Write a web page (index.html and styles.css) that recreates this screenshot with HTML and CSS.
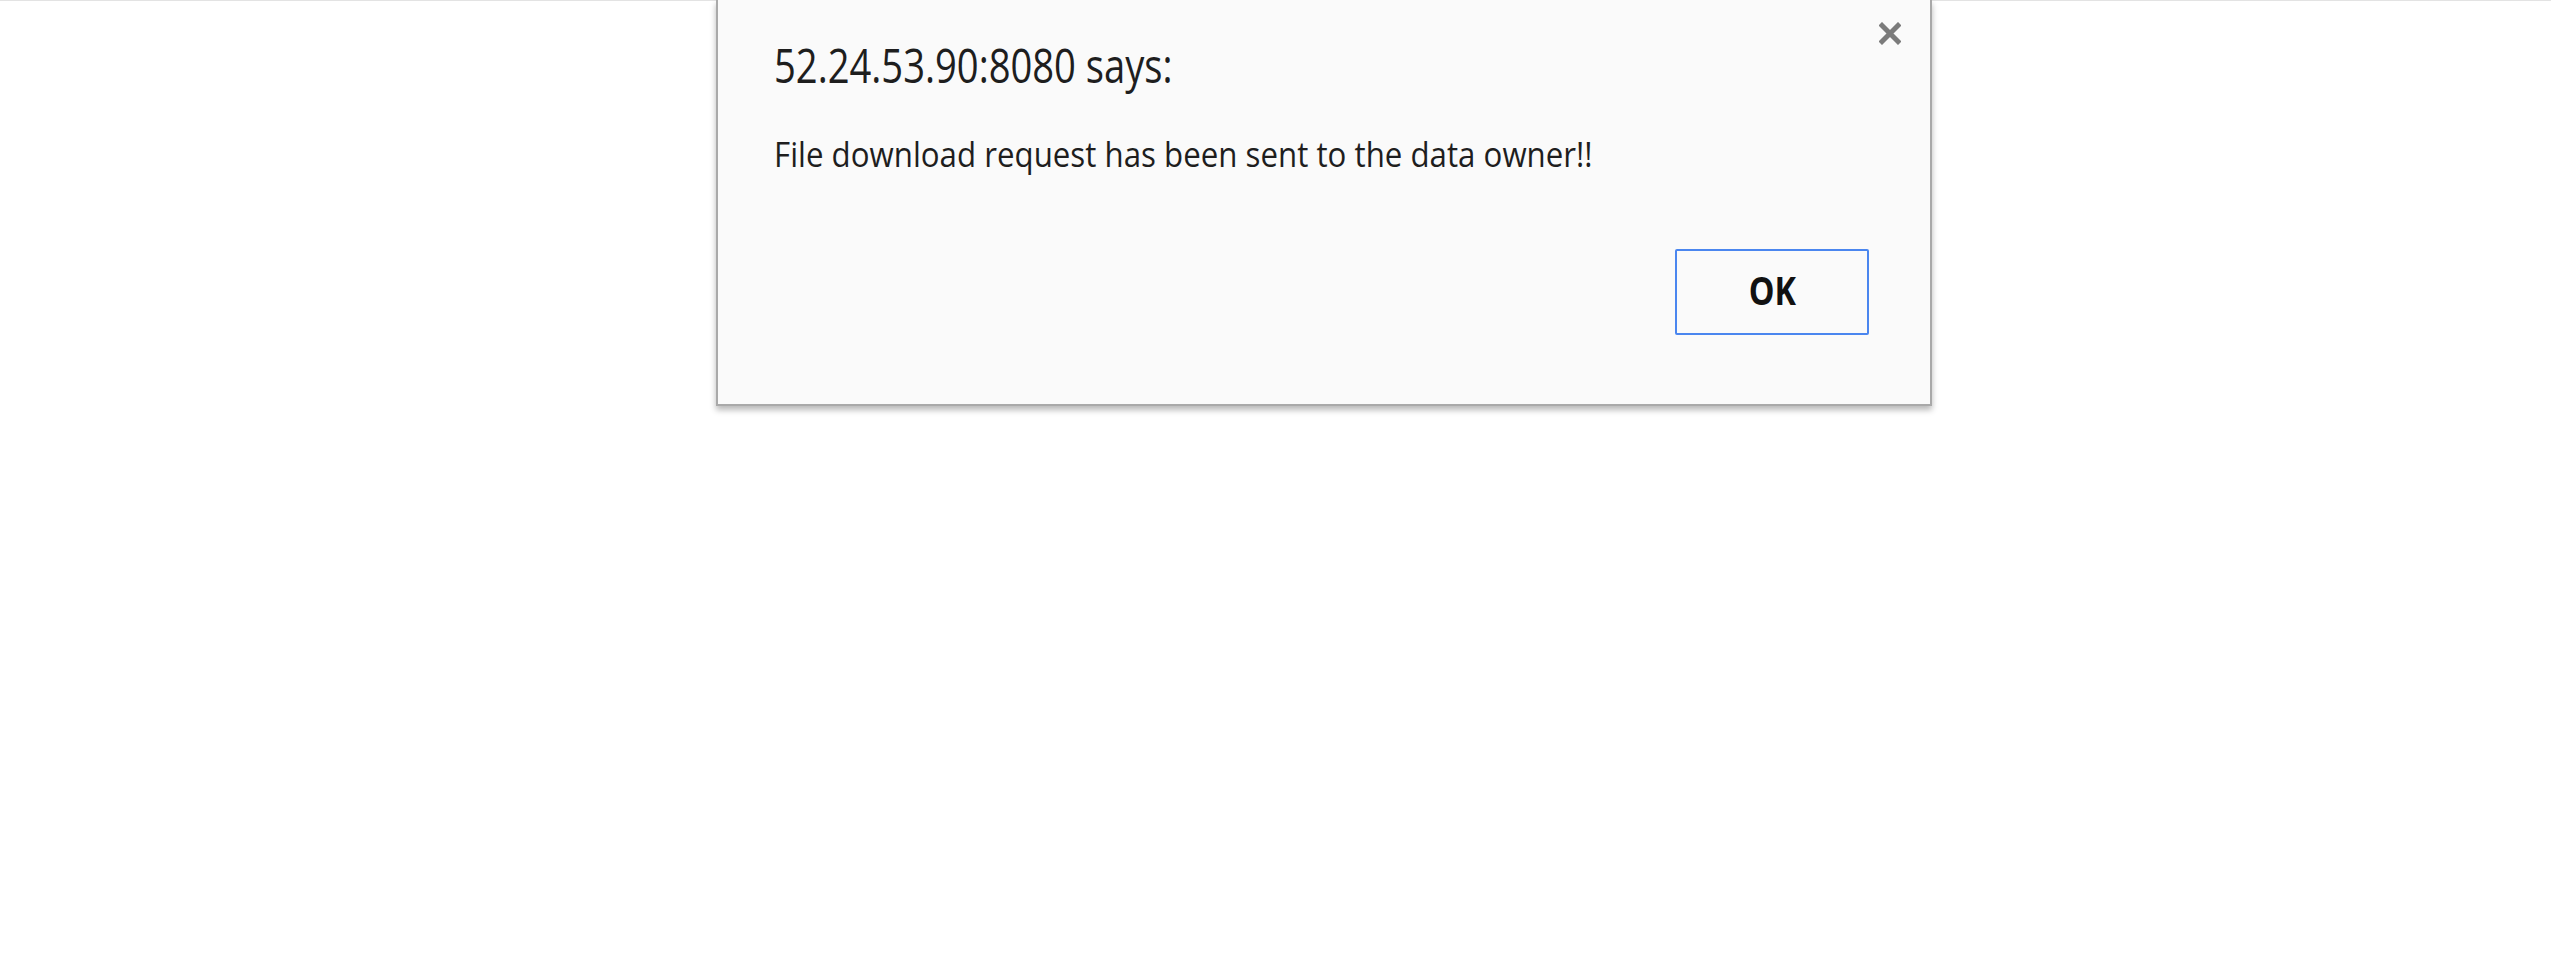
FILE: index.html
```html
<!DOCTYPE html>
<html lang="en">
<head>
<meta charset="utf-8">
<title>Alert</title>
<link rel="stylesheet" href="styles.css">
</head>
<body>
<div class="page">
  <div class="top-rule"></div>
</div>
<div class="dialog" role="alertdialog">
  <button class="close" aria-label="Close">
    <svg width="22" height="23" viewBox="0 0 22 23"><path d="M3 3.5 L19 19.5 M19 3.5 L3 19.5" stroke="#7b7b7b" stroke-width="5" stroke-linecap="square"/></svg>
  </button>
  <div class="title"><span class="squeeze t">52.24.53.90:8080 says:</span></div>
  <div class="message"><span class="squeeze m">File download request has been sent to the data owner!!</span></div>
  <div class="actions">
    <button class="ok"><span class="squeeze o">OK</span></button>
  </div>
</div>
</body>
</html>
```

FILE: styles.css
```css
html, body {
  margin: 0;
  padding: 0;
  background: #ffffff;
}
body {
  width: 2551px;
  height: 963px;
  overflow: hidden;
  font-family: "Open Sans", "Noto Sans", "Liberation Sans", sans-serif;
}
.page {
  height: 963px;
}
.top-rule {
  height: 1px;
  background: #e3e3e3;
}
.dialog {
  position: absolute;
  left: 716px;
  top: 0;
  width: 1212px;
  height: 404px;
  box-sizing: content-box;
  background: #fafafa;
  border: 2px solid #a9a9a9;
  border-top: none;
  box-shadow: 0 4px 6px rgba(0, 0, 0, 0.28);
  display: flex;
  flex-direction: column;
  padding: 0;
}
.squeeze {
  display: inline-block;
  white-space: nowrap;
  transform-origin: left center;
}
.title {
  margin-top: 37px;
  padding-left: 56px;
  font-size: 48px;
  line-height: 56px;
  color: #1e1e1e;
}
.t { transform: scaleX(0.795); }
.message {
  margin-top: 37px;
  padding-left: 56px;
  font-size: 35px;
  line-height: 48px;
  color: #1e1e1e;
}
.m { transform: scaleX(0.893); }
.actions {
  display: flex;
  justify-content: flex-end;
  margin-top: 71px;
  padding-right: 61px;
}
.ok {
  width: 194px;
  height: 86px;
  box-sizing: border-box;
  border: 2px solid #4a86ef;
  border-radius: 2px;
  background: #fafafa;
  font-family: "Open Sans", "Noto Sans", "Liberation Sans", sans-serif;
  font-weight: 700;
  font-size: 39px;
  line-height: 1;
  color: #111111;
  padding: 0 0 6px 0;
  display: flex;
  align-items: center;
  justify-content: center;
}
.o {
  transform: scaleX(0.83);
  transform-origin: center center;
}
.close {
  position: absolute;
  top: 22px;
  right: 29px;
  width: 22px;
  height: 23px;
  padding: 0;
  border: none;
  background: transparent;
  display: block;
}
.close svg {
  display: block;
}
```
